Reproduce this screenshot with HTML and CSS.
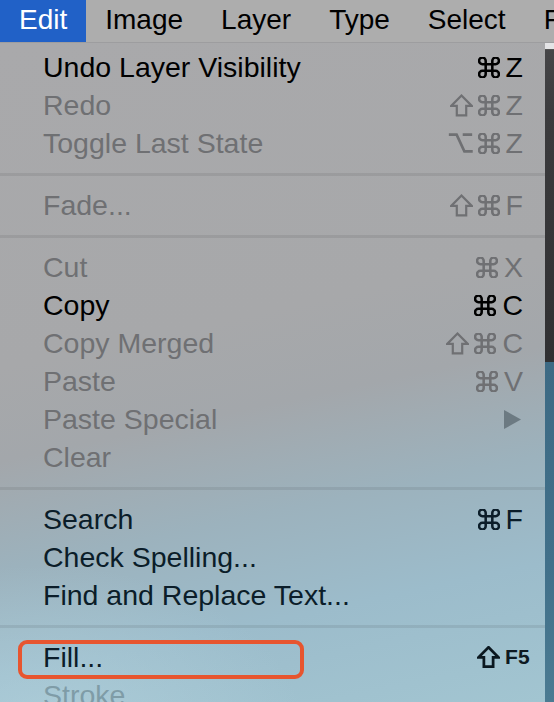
FILE: index.html
```html
<!DOCTYPE html>
<html>
<head>
<meta charset="utf-8">
<link rel="stylesheet" href="styles.css">
</head>
<body>
<svg width="0" height="0" class="defs">
  <defs>
    <symbol id="cmd" viewBox="2.5 2.5 19 19"><path d="M15 6v12a3 3 0 1 0 3-3H6a3 3 0 1 0 3 3V6a3 3 0 1 0-3 3h12a3 3 0 1 0-3-3" fill="none" stroke="currentColor" stroke-width="2.3" stroke-linejoin="round"/></symbol>
    <symbol id="shift" viewBox="1.5 1.5 21 21"><path d="M12 2.9 L21.4 12.4 H16.3 V21.1 H7.7 V12.4 H2.6 Z" fill="none" stroke="currentColor" stroke-width="2" stroke-linejoin="miter"/></symbol>
    <symbol id="shiftb" viewBox="2 2 20 20"><path d="M12 3.2 L21 12.3 H16.2 V20.8 H7.8 V12.3 H3 Z" fill="none" stroke="currentColor" stroke-width="2.5" stroke-linejoin="miter"/></symbol>
    <symbol id="opt" viewBox="1 3 22 18"><path d="M1.5 4.5h7l7 15h7.5M14 4.5h8.5" fill="none" stroke="currentColor" stroke-width="2.4"/></symbol>
  </defs>
</svg>
<div class="screen">
  <div class="menubar">
    <div class="mb-item active">Edit</div>
    <div class="mb-item">Image</div>
    <div class="mb-item">Layer</div>
    <div class="mb-item">Type</div>
    <div class="mb-item">Select</div>
    <div class="mb-item">F</div>
  </div>
  <div class="below">
    <div class="menu">
      <div class="row on"><span class="label">Undo Layer Visibility</span><span class="keys"><svg class="k cmd"><use href="#cmd"/></svg><span class="ch">Z</span></span></div>
      <div class="row off"><span class="label">Redo</span><span class="keys"><svg class="k shift"><use href="#shift"/></svg><svg class="k cmd"><use href="#cmd"/></svg><span class="ch">Z</span></span></div>
      <div class="row off"><span class="label">Toggle Last State</span><span class="keys"><svg class="k opt"><use href="#opt"/></svg><svg class="k cmd"><use href="#cmd"/></svg><span class="ch">Z</span></span></div>
      <div class="sep"></div>
      <div class="row off"><span class="label">Fade...</span><span class="keys"><svg class="k shift"><use href="#shift"/></svg><svg class="k cmd"><use href="#cmd"/></svg><span class="ch">F</span></span></div>
      <div class="sep"></div>
      <div class="row off"><span class="label">Cut</span><span class="keys"><svg class="k cmd"><use href="#cmd"/></svg><span class="ch">X</span></span></div>
      <div class="row on"><span class="label">Copy</span><span class="keys"><svg class="k cmd"><use href="#cmd"/></svg><span class="ch">C</span></span></div>
      <div class="row off"><span class="label">Copy Merged</span><span class="keys"><svg class="k shift"><use href="#shift"/></svg><svg class="k cmd"><use href="#cmd"/></svg><span class="ch">C</span></span></div>
      <div class="row off"><span class="label">Paste</span><span class="keys"><svg class="k cmd"><use href="#cmd"/></svg><span class="ch">V</span></span></div>
      <div class="row off"><span class="label">Paste Special</span><span class="keys"><svg class="k tri" viewBox="0 0 17 19"><path d="M0 0 L17 9.5 L0 19 Z" fill="currentColor"/></svg></span></div>
      <div class="row off"><span class="label">Clear</span></div>
      <div class="sep"></div>
      <div class="row on lo"><span class="label">Search</span><span class="keys"><svg class="k cmd"><use href="#cmd"/></svg><span class="ch">F</span></span></div>
      <div class="row on lo"><span class="label">Check Spelling...</span></div>
      <div class="row on lo"><span class="label">Find and Replace Text...</span></div>
      <div class="sep"></div>
      <div class="row on lo fill"><span class="label">Fill...</span><span class="keys f5"><svg class="k shiftb"><use href="#shiftb"/></svg><span class="ch small">F5</span></span><span class="mark"></span></div>
      <div class="row off lo2"><span class="label">Stroke...</span></div>
    </div>
    <div class="strip">
      <div class="strip-top"></div>
      <div class="strip-dark"></div>
      <div class="strip-blue"></div>
    </div>
  </div>
</div>
</body>
</html>
```

FILE: styles.css
```css
html, body {
  margin: 0;
  padding: 0;
}
body {
  width: 554px;
  height: 702px;
  overflow: hidden;
  font-family: "Liberation Sans", Arial, sans-serif;
  background: #3a3a3a;
}
.defs {
  position: absolute;
  width: 0;
  height: 0;
}
.screen {
  display: flex;
  flex-direction: column;
  height: 702px;
}
.menubar {
  display: flex;
  height: 42px;
  background: #adadad;
  border-bottom: 1px solid #9d9d9f;
  flex: none;
  overflow: hidden;
}
.mb-item {
  padding: 0 19px 2px;
  font-size: 28px;
  line-height: 40px;
  color: #000;
  white-space: nowrap;
  flex: none;
}
.mb-item.active {
  background: #2161c7;
  color: #fff;
}
.below {
  display: flex;
  flex: 1;
  min-height: 0;
}
.menu {
  width: 545px;
  flex: none;
  padding-top: 5px;
  background:
    radial-gradient(ellipse 380px 240px at 40px 690px, rgba(182, 214, 224, 0.6), rgba(182, 214, 224, 0) 70%),
    linear-gradient(168deg, #a9a9ab 0%, #a7a8aa 42%, #a3a7ab 54%, #9cb2bd 68%, #9cbccb 82%, #a2c5d1 100%);
}
.row {
  position: relative;
  display: flex;
  align-items: center;
  height: 38px;
  padding: 0 22px 0 43px;
  font-size: 28.5px;
  line-height: 38px;
  white-space: nowrap;
}
.label {
  flex: 1;
}
.row.on { color: #000; }
.row.on.lo { color: #0b1d29; }
.row.off { color: #6f7073; }
.row.off.lo2 { color: #7f9ca7; }
.keys {
  display: flex;
  align-items: center;
  gap: 6px;
}
.k {
  display: block;
  flex: none;
}
.cmd {
  width: 22px;
  height: 21px;
}
.shift {
  width: 23px;
  height: 23px;
  margin-right: -1px;
}
.opt {
  width: 25px;
  height: 20px;
  margin-right: -1px;
}
.tri {
  width: 17px;
  height: 19px;
  margin-right: 2px;
  color: #6c7a82;
}
.ch {
  line-height: 38px;
}
.f5 {
  margin-right: -7px;
  gap: 5px;
}
.shiftb {
  width: 23px;
  height: 22px;
  color: #0b1820;
}
.ch.small {
  font-size: 21px;
  font-weight: bold;
  color: #0e1a22;
  letter-spacing: 0.3px;
}
.mark {
  position: absolute;
  left: 18px;
  top: 2px;
  width: 278px;
  height: 31px;
  border: 4px solid #e7552f;
  border-radius: 9px;
}
.sep {
  height: 3px;
  margin: 11px 0 10px;
  background: rgba(0, 0, 0, 0.075);
}
.strip {
  flex: 1;
  display: flex;
  flex-direction: column;
}
.strip-top {
  height: 6px;
  background: #e4e4e6;
  border-bottom: 1px solid #555;
}
.strip-dark {
  height: 312px;
  background: linear-gradient(180deg, #454547 0%, #3b3b3d 20%, #303032 100%);
}
.strip-blue {
  flex: 1;
  background: linear-gradient(180deg, #3d6a84 0%, #41708a 60%, #4b7b92 100%);
}
```
